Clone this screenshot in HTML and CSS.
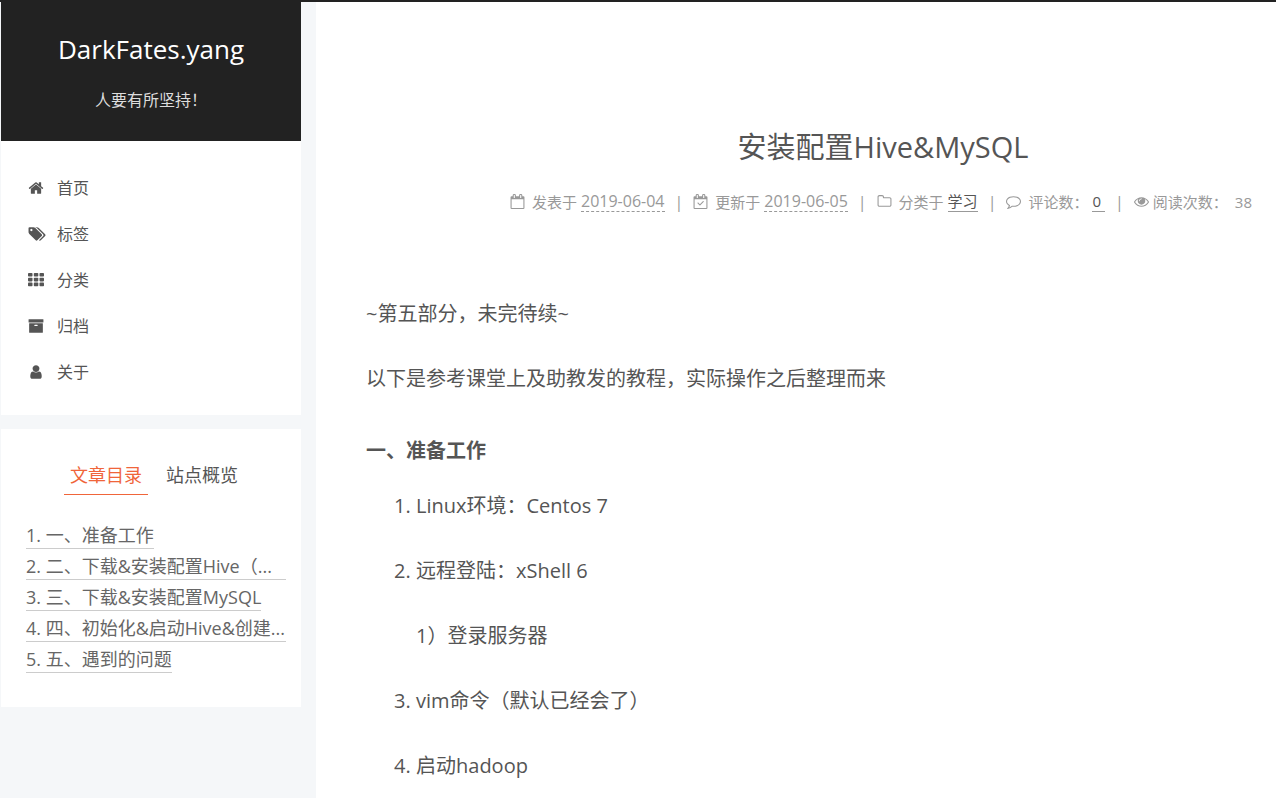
FILE: index.html
```html
<!DOCTYPE html>
<html lang="zh-CN">
<head>
<meta charset="utf-8">
<title>安装配置Hive&amp;MySQL | DarkFates.yang</title>
<link rel="stylesheet" href="styles.css">
</head>
<body>
<div class="page">
  <aside class="sidebar">
    <div class="panel">
      <div class="brand">
        <a class="brand-name" href="#">DarkFates.yang</a>
        <p class="brand-motto">人要有所坚持！</p>
      </div>
      <nav class="menu">
        <a href="#"><svg class="icon" viewBox="0 0 1792 1792"><path d="M1472 992v480q0 26-19 45t-45 19h-384v-384h-256v384h-384q-26 0-45-19t-19-45v-480q0-1 .5-3t.5-3l575-474 575 474q1 2 1 6zm223-69l-62 74q-8 9-21 11h-3q-13 0-21-7l-692-577-692 577q-12 8-24 7-13-2-21-11l-62-74q-8-10-7-23.5t11-21.5l719-599q32-26 76-26t76 26l244 204v-195q0-14 9-23t23-9h192q14 0 23 9t9 23v408l219 182q10 8 11 21.5t-7 23.5z"/></svg>首页</a>
        <a href="#"><svg class="icon icon-wide" viewBox="0 0 1899 1792"><path d="M448 448q0-53-37.5-90.5t-90.5-37.5-90.5 37.5-37.5 90.5 37.5 90.5 90.5 37.5 90.5-37.5 37.5-90.5zm1067 576q0 53-37 90l-491 492q-39 37-91 37-53 0-90-37l-715-716q-38-37-64.5-101t-26.5-117v-416q0-52 38-90t90-38h416q53 0 117 26.5t102 64.5l715 714q37 39 37 91zm384 0q0 53-37 90l-491 492q-39 37-91 37-36 0-59-14t-53-45l470-470q37-37 37-90 0-52-37-91l-715-714q-38-38-102-64.5t-117-26.5h224q53 0 117 26.5t102 64.5l715 714q37 39 37 91z"/></svg>标签</a>
        <a href="#"><svg class="icon" viewBox="0 0 16 16"><rect x="0" y="1" width="4.500" height="3.600" rx=".8"/><rect x="5.800" y="1" width="4.500" height="3.600" rx=".8"/><rect x="11.500" y="1" width="4.500" height="3.600" rx=".8"/><rect x="0" y="5.800" width="4.500" height="3.600" rx=".8"/><rect x="5.800" y="5.800" width="4.500" height="3.600" rx=".8"/><rect x="11.500" y="5.800" width="4.500" height="3.600" rx=".8"/><rect x="0" y="10.600" width="4.500" height="3.600" rx=".8"/><rect x="5.800" y="10.600" width="4.500" height="3.600" rx=".8"/><rect x="11.500" y="10.600" width="4.500" height="3.600" rx=".8"/></svg>分类</a>
        <a href="#"><svg class="icon" viewBox="0 0 1792 1792"><path d="M1088 832q0-26-19-45t-45-19h-256q-26 0-45 19t-19 45 19 45 45 19h256q26 0 45-19t19-45zm576-192v960q0 26-19 45t-45 19h-1408q-26 0-45-19t-19-45v-960q0-26 19-45t45-19h1408q26 0 45 19t19 45zm64-448v256q0 26-19 45t-45 19h-1536q-26 0-45-19t-19-45v-256q0-26 19-45t45-19h1536q26 0 45 19t19 45z"/></svg>归档</a>
        <a href="#"><svg class="icon" viewBox="0 0 1792 1792"><path d="M1536 1399q0 109-62.500 187t-150.500 78h-854q-88 0-150.500-78t-62.500-187q0-85 8.500-160.500t31.500-152 58.500-131 94-89 134.500-34.500q131 128 313 128t313-128q76 0 134.500 34.500t94 89 58.500 131 31.500 152 8.500 160.500zm-256-887q0 159-112.500 271.500t-271.500 112.500-271.500-112.500-112.500-271.500 112.500-271.500 271.500-112.500 271.500 112.500 112.500 271.500z"/></svg>关于</a>
      </nav>
    </div>
    <div class="panel toc">
      <div class="tabs">
        <button class="tab tab-active" type="button">文章目录</button>
        <button class="tab" type="button">站点概览</button>
      </div>
      <div class="toc-list">
        <a href="#prepare">1. 一、准备工作</a>
        <a class="toc-full" href="#">2. 二、下载&amp;安装配置Hive（...</a>
        <a href="#">3. 三、下载&amp;安装配置MySQL</a>
        <a class="toc-full" href="#">4. 四、初始化&amp;启动Hive&amp;创建...</a>
        <a href="#">5. 五、遇到的问题</a>
      </div>
    </div>
  </aside>
  <main class="content">
    <header class="post-header">
      <h1>安装配置Hive&amp;MySQL</h1>
      <div class="meta">
        <span class="meta-item"><svg class="icon" viewBox="0 0 1792 1792"><path fill-rule="evenodd" d="M192 1664h1408V640H192zM576 448V160q0-32-32-32h-64q-32 0-32 32v288q0 32 32 32h64q32 0 32-32zm768 0V160q0-32-32-32h-64q-32 0-32 32v288q0 32 32 32h64q32 0 32-32zm384-64v1280q0 128-128 128H192q-128 0-128-128V384q0-128 128-128h128v-96Q320 0 480 0h64q160 0 160 160v96h384v-96Q1088 0 1248 0h64q160 0 160 160v96h128q128 0 128 128z"/></svg>发表于 <time datetime="2019-06-04">2019-06-04</time></span>
        <span class="bar">|</span>
        <span class="meta-item"><svg class="icon" viewBox="0 0 1792 1792"><path fill-rule="evenodd" d="M192 1664h1408V640H192zM576 448V160q0-32-32-32h-64q-32 0-32 32v288q0 32 32 32h64q32 0 32-32zm768 0V160q0-32-32-32h-64q-32 0-32 32v288q0 32 32 32h64q32 0 32-32zm384-64v1280q0 128-128 128H192q-128 0-128-128V384q0-128 128-128h128v-96Q320 0 480 0h64q160 0 160 160v96h384v-96Q1088 0 1248 0h64q160 0 160 160v96h128q128 0 128 128z"/><path d="M1290 930l-440 440q-22 22-46 0l-270-270q-22-22 0-44l46-46q22-22 44 0l202 202 372-372q22-22 44 0l48 46q22 22 0 44z"/></svg>更新于 <time datetime="2019-06-05">2019-06-05</time></span>
        <span class="bar">|</span>
        <span class="meta-item"><svg class="icon" viewBox="0 0 1792 1792"><path d="M1600 1312v-704q0-40-28-68t-68-28h-704q-40 0-68-28t-28-68v-64q0-40-28-68t-68-28h-320q-40 0-68 28t-28 68v960q0 40 28 68t68 28h1216q40 0 68-28t28-68zm128-704v704q0 92-66 158t-158 66h-1216q-92 0-158-66t-66-158v-960q0-92 66-158t158-66h320q92 0 158 66t66 158v32h672q92 0 158 66t66 158z"/></svg>分类于 <a href="#">学习</a></span>
        <span class="bar">|</span>
        <span class="meta-item"><svg class="icon" viewBox="0 0 1792 1792"><path d="M896 384q-204 0-381.500 69.500t-282 187.500-104.500 255q0 112 71.500 213.500t201.500 175.500l87 50-27 96q-24 91-70 172 152-63 275-171l43-38 57 6q69 8 130 8 204 0 381.500-69.500t282-187.500 104.500-255-104.500-255-282-187.500-381.500-69.500zm896 512q0 174-120 321.500t-326 233-450 85.500q-70 0-145-8-198 175-460 242-49 14-114 22h-5q-15 0-27-10.500t-16-27.500v-1q-3-4-.5-12t2-10 4.500-9.500l6-9 7-8.500 8-9q7-8 31-34.500t34.500-38 31-39.500 32.500-51 27-59 26-76q-157-89-247.500-220t-90.500-281q0-174 120-321.500t326-233 450-85.500 450 85.500 326 233 120 321.500z"/></svg>评论数： <a class="count" href="#">0</a></span>
        <span class="bar">|</span>
        <span class="meta-item meta-views"><svg class="icon" viewBox="0 0 1792 1792"><path d="M1664 960q-152-236-381-353 61 104 61 225 0 185-131.500 316.500t-316.500 131.500-316.500-131.500-131.500-316.500q0-121 61-225-229 117-381 353 133 205 333.500 326.500t434.500 121.500 434.500-121.500 333.500-326.500zm-720-384q0-20-14-34t-34-14q-125 0-214.500 89.500t-89.500 214.500q0 20 14 34t34 14 34-14 14-34q0-86 61-147t147-61q20 0 34-14t14-34zm848 384q0 34-20 69-140 230-376.500 368.500t-499.500 138.500-499.500-139-376.500-368q-20-35-20-69t20-69q140-229 376.500-368t499.500-139 499.500 139 376.500 368q20 35 20 69z"/></svg>阅读次数： <span class="views">38</span></span>
      </div>
    </header>
    <article class="post">
      <p>~第五部分，未完待续~</p>
      <p>以下是参考课堂上及助教发的教程，实际操作之后整理而来</p>
      <h2 id="prepare">一、准备工作</h2>
      <ol>
        <li><p>Linux环境：Centos 7</p></li>
        <li><p>远程登陆：xShell 6</p><p>1）登录服务器</p></li>
        <li><p>vim命令（默认已经会了）</p></li>
        <li><p>启动hadoop</p></li>
      </ol>
    </article>
  </main>
</div>
</body>
</html>
```

FILE: styles.css
```css
* { box-sizing: border-box; }
body {
  margin: 0;
  background: #f5f7f9;
  color: #555;
  font-family: "Open Sans", "Noto Sans CJK SC", sans-serif;
  font-size: 20px;
  line-height: 40px;
}
a { color: inherit; text-decoration: none; }
p, h1, h2, ol { margin: 0; }
.icon { width: 16px; height: 16px; fill: currentColor; flex: none; }
.page {
  display: flex;
  gap: 15px;
  height: 100vh;
  overflow: hidden;
  border-top: 2px solid #222;
}
.sidebar {
  flex: none;
  width: 301px;
  padding-left: 1px;
  display: flex;
  flex-direction: column;
  gap: 14px;
}
.panel { background: #fff; }
.brand {
  background: #222;
  color: #fff;
  text-align: center;
  padding: 27px 0 23px;
}
.brand-name { display: block; font-size: 26px; }
.brand-motto {
  margin-top: 14px;
  font-size: 16px;
  line-height: 35px;
  color: #ddd;
}
.menu { padding: 24px 0 20px; }
.menu a {
  display: flex;
  align-items: center;
  gap: 13px;
  padding-left: 27px;
  font-size: 16px;
  line-height: 46px;
}
.menu .icon-wide { width: 18px; margin-right: -2px; }
.toc { padding: 28px 15px 34px 25px; }
.tabs { display: flex; justify-content: center; gap: 12px; padding-right: 4px; }
.tab {
  border: 0;
  border-bottom: 1px solid transparent;
  background: none;
  padding: 0 6px;
  font: inherit;
  font-size: 18px;
  line-height: 37px;
  color: #555;
}
.tab-active { color: #f0653a; border-color: #f0653a; }
.toc-list {
  display: flex;
  flex-direction: column;
  align-items: flex-start;
  gap: 4px;
  margin-top: 27px;
}
.toc-list a {
  white-space: nowrap;
  border-bottom: 1px solid #ccc;
  font-size: 18px;
  line-height: 26px;
  color: #666;
}
.toc-list .toc-full { align-self: stretch; }
.content { flex: 1; min-width: 0; background: #fff; padding: 123px 0 0 50px; }
.post-header { padding-left: 124px; text-align: center; }
h1 { font-size: 29px; font-weight: 400; line-height: 44px; }
.meta {
  display: flex;
  justify-content: center;
  align-items: center;
  gap: 10px;
  margin-top: 22px;
  padding-right: 4px;
  font-size: 15px;
  line-height: 20px;
  color: #999;
  white-space: nowrap;
}
.meta-item { display: flex; align-items: center; gap: 4px; }
.meta-item .icon { width: 15px; height: 15px; margin-right: 3px; }
.meta-views .icon { margin-right: 0; }
.meta time { font-size: 16px; border-bottom: 1px dashed #999; }
.meta a { color: #555; border-bottom: 1px solid #999; }
.meta .count { padding-right: 4px; }
.bar { font-size: 16px; }
.views { padding-left: 3px; }
.post { padding-top: 82px; }
.post p { margin-bottom: 25px; }
h2 { font-size: 20px; line-height: 30px; margin: 37px 0 20px; }
ol { padding-left: 50px; }
```
